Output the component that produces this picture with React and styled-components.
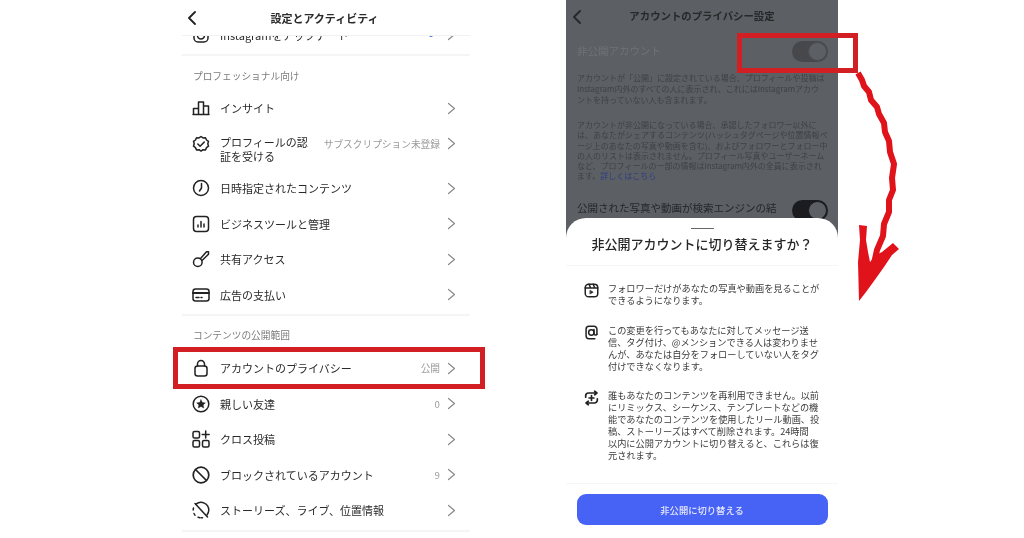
import React from "react";
import styled, { createGlobalStyle, css } from "styled-components";

const Global = createGlobalStyle`
  html, body { margin: 0; padding: 0; background: #fff; }
  body { font-family: "Noto Sans CJK JP", "Inter", "Liberation Sans", sans-serif; color: #262626; }
`;

const Page = styled.div`
  position: relative;
  width: 1024px;
  height: 538px;
  overflow: hidden;
  display: flex;
  align-items: flex-start;
  background: #fff;
  filter: blur(0.35px);
`;

/* ---------- left phone ---------- */
const LeftPhone = styled.section`
  width: 288px;
  height: 538px;
  margin-left: 182px;
  display: flex;
  flex-direction: column;
  overflow: hidden;
`;
const Header = styled.header`
  position: relative;
  z-index: 1;
  flex: none;
  height: 36px;
  display: flex;
  align-items: center;
  justify-content: center;
  background: #fff;
  border-bottom: 1px solid #f1f1f1;
  box-sizing: border-box;
`;
const BackButton = styled.span`
  position: absolute;
  left: ${(p) => p.$left}px;
  top: ${(p) => p.$top}px;
  display: flex;
`;
const HeaderTitle = styled.h1`
  margin: 0 0 0 ${(p) => p.$shift || 0}px;
  font-size: ${(p) => p.$size || 11}px;
  line-height: 14px;
  font-weight: 700;
  color: ${(p) => p.$color || "#2b2b2b"};
`;
const List = styled.div`
  margin-top: -19px;
  display: flex;
  flex-direction: column;
`;
const IconSlot = styled.span`
  flex: none;
  width: 18px;
  height: 18px;
  margin-right: 10px;
  display: flex;
  align-items: center;
  justify-content: center;
`;
const Label = styled.span`
  flex: 1;
  font-size: 11px;
  line-height: 14px;
  color: #2a2a2a;
`;
const Meta = styled.span`
  flex: none;
  font-size: 9.7px;
  line-height: 12px;
  color: #9a9a9a;
  margin-right: 7px;
`;
const ChevronArt = styled.svg`
  flex: none;
  margin-right: 1px;
`;
const Row = styled.div`
  flex: none;
  height: ${(p) => p.$h || 35.5}px;
  display: flex;
  align-items: center;
  padding: 0 13px 0 10px;
  ${(p) =>
    p.$lift &&
    css`
      ${IconSlot}, ${Meta}, ${ChevronArt} {
        margin-bottom: 9px;
      }
      ${Label} {
        margin-top: 2px;
      }
    `}
`;
const Dot = styled.span`
  flex: none;
  width: 4px;
  height: 4px;
  border-radius: 50%;
  background: #3f5df0;
  margin-right: 14px;
`;
const Divider = styled.div`
  flex: none;
  height: 2px;
  margin: ${(p) => p.$m || "1px 0"};
  background: #f5f5f5;
`;
const SectionTitle = styled.div`
  flex: none;
  height: ${(p) => p.$h}px;
  padding: ${(p) => p.$pt}px 0 0 11px;
  box-sizing: border-box;
  font-size: 9.7px;
  line-height: 12px;
  color: #7c7c7c;
`;

/* ---------- right phone ---------- */
const RightPhone = styled.section`
  position: relative;
  width: 272px;
  height: 538px;
  margin-left: 96px;
  background: #5c5f63;
  overflow: hidden;
`;
const DimHeader = styled.header`
  height: 32px;
  display: flex;
  align-items: center;
  justify-content: center;
`;
const DimContent = styled.div`
  padding: 8px 10px 0 11px;
  display: flex;
  flex-direction: column;
`;
const ToggleRow = styled.div`
  display: flex;
  align-items: ${(p) => p.$align || "center"};
  justify-content: space-between;
  height: 22px;
  margin-top: ${(p) => p.$mt || 0}px;
`;
const DimLabel = styled.span`
  font-size: ${(p) => p.$size}px;
  line-height: 14px;
  padding-top: ${(p) => p.$pt || 0}px;
  color: ${(p) => p.$color};
`;
const Toggle = styled.span`
  flex: none;
  position: relative;
  width: 36px;
  height: 21px;
  border-radius: 11px;
  background: ${(p) => p.$bg};
`;
const Knob = styled.span`
  position: absolute;
  right: 1px;
  top: 1px;
  width: 19px;
  height: 19px;
  border-radius: 50%;
  box-sizing: border-box;
  background: #5c5f63;
  border: 1px solid ${(p) => p.$edge};
`;
const DimPara = styled.p`
  margin: ${(p) => p.$mt}px 0 0;
  font-size: 8px;
  line-height: ${(p) => p.$lh}px;
  color: #3f4245;
  white-space: nowrap;
`;
const DimLink = styled.span`
  color: #2f3f86;
`;
const Sheet = styled.div`
  position: absolute;
  left: 0;
  right: 0;
  top: 218px;
  bottom: 0;
  background: #fff;
  border-radius: 20px 20px 0 0;
  display: flex;
  flex-direction: column;
`;
const Handle = styled.span`
  flex: none;
  align-self: center;
  width: 23px;
  height: 1px;
  margin-top: 10px;
  background: #666;
`;
const SheetTitle = styled.h2`
  flex: none;
  margin: 6px 0 0;
  text-align: center;
  font-size: 13px;
  line-height: 18px;
  font-weight: 500;
  color: #262626;
`;
const SheetDivider = styled.div`
  flex: none;
  height: 1px;
  background: #f6f6f6;
  margin-top: ${(p) => p.$mt}px;
`;
const Notes = styled.div`
  flex: none;
  height: 217px;
  padding: 17px 0 0 15px;
  box-sizing: border-box;
  display: flex;
  flex-direction: column;
`;
const Note = styled.div`
  display: flex;
  margin-top: ${(p) => p.$mt || 0}px;
`;
const NoteIcon = styled.span`
  flex: none;
  width: 15px;
  height: 15px;
  margin: 0 9px 0 3px;
  display: flex;
`;
const NoteText = styled.p`
  margin: 0;
  font-size: 9.2px;
  line-height: 11.9px;
  color: #3a3a3a;
  white-space: nowrap;
`;
const Primary = styled.button`
  flex: none;
  align-self: center;
  width: 251px;
  height: 31px;
  margin-top: 10px;
  border: 0;
  border-radius: 9px;
  background: #4763f5;
  color: #e6e9fd;
  font-family: inherit;
  font-size: 9.3px;
  font-weight: 500;
`;

/* ---------- annotations ---------- */
const RedBox = styled.div`
  position: absolute;
  left: ${(p) => p.$x}px;
  top: ${(p) => p.$y}px;
  width: ${(p) => p.$w}px;
  height: ${(p) => p.$h}px;
  box-sizing: border-box;
  border: 5px solid #d21f23;
`;
const ArrowArt = styled.svg`
  position: absolute;
  left: 840px;
  top: 60px;
`;

/* ---------- icons ---------- */
const Svg = ({ size = 18, sw = 1.5, children }) => (
  <svg width={size} height={size} viewBox="0 0 18 18" fill="none" stroke="#222" strokeWidth={sw} strokeLinecap="round" strokeLinejoin="round">
    {children}
  </svg>
);
const Chevron = ({ color = "#8a8a8a" }) => (
  <ChevronArt width="9" height="13" viewBox="0 0 9 13" fill="none" stroke={color} strokeWidth="1.2" strokeLinecap="round" strokeLinejoin="round">
    <path d="M1.500 1.500 7.500 6.500l-6 5" />
  </ChevronArt>
);
const Back = ({ color = "#222" }) => (
  <svg width="10" height="14" viewBox="0 0 10 14" fill="none" stroke={color} strokeWidth="1.8" strokeLinecap="round" strokeLinejoin="round">
    <path d="M8 1 2 7l6 6" />
  </svg>
);
const Ig = () => <Svg><rect x="2" y="2" width="14" height="14" rx="4" /><path d="M5.500 9.500a3.500 3.500 0 0 0 7 0" /></Svg>;
const Insights = () => <Svg><path d="M1.500 15.500V9.500h5v6M6.500 15.500V3h5v12.500M11.500 15.500V7h5v8.500M1 15.500h16" /></Svg>;
const Badge = () => <Svg><path d="M9 1.500l2 1.400 2.500-.2 1 2.300 2 1.400-.7 2.400.7 2.400-2 1.400-1 2.300-2.500-.2-2 1.400-2-1.400-2.500.2-1-2.300-2-1.400.7-2.400-.7-2.400 2-1.400 1-2.300 2.500.2z" /><path d="M5.800 9l2.300 2.300 4.200-4.300" /></Svg>;
const Clock = () => <Svg><circle cx="9" cy="9" r="7.500" /><path d="M9.500 4.500V9L7.500 12" /></Svg>;
const Biz = () => <Svg><rect x="1.500" y="1.500" width="15" height="15" rx="3" /><path d="M6 12V10M9 12V6.500M12 12V9" /></Svg>;
const Key = () => <Svg><circle cx="5.800" cy="12.200" r="4.300" /><path d="M8.300 8.700 14.500 1.800h2v2.400L10 10.500" /></Svg>;
const Card = () => <Svg><rect x="1" y="3" width="16" height="12" rx="2.500" /><path d="M1 7h16" strokeWidth="2.200" /><path d="M4 11.500h3M9 11.500h1" /></Svg>;
const Lock = () => <Svg><rect x="3" y="7" width="12" height="10" rx="2.500" /><path d="M5.500 7V5a3.500 3.500 0 0 1 7 0v2" /></Svg>;
const Star = () => <Svg><circle cx="9" cy="9" r="7.800" /><path d="M9 4.800l1.300 2.700 3 .4-2.200 2 .6 3L9 11.400l-2.700 1.500.6-3-2.200-2 3-.4z" fill="#222" strokeWidth=".5" /></Svg>;
const Cross = () => <Svg><rect x="1" y="1.500" width="6.500" height="6.500" rx="1.500" /><rect x="1" y="10.500" width="6.500" height="6.500" rx="1.500" /><rect x="10.500" y="10.500" width="6.500" height="6.500" rx="1.500" /><path d="M13.700 1v7M10.200 4.500h7" /></Svg>;
const Ban = () => <Svg sw={1.7}><circle cx="9" cy="9" r="7.800" /><path d="M3.500 3.500l11 11" /></Svg>;
const Stories = () => <Svg><path d="M4 3.200A7.800 7.800 0 0 1 16.800 9c0 2-.8 3.800-2 5.200" /><path d="M1.200 9c0-.7.1-1.400.3-2M2 12.500l1 1.800M6 16.300l2 .5h2.500" strokeDasharray="2 1.500" /><path d="M3 2.500 15.500 16" /></Svg>;
const Reels = () => <Svg size={15} sw={1.8}><rect x="1.500" y="1.500" width="15" height="15" rx="4" /><path d="M1.500 6h15M6 1.500l2 4.500M11 1.500l2 4.500" /><path d="M7.500 9l3.500 2-3.500 2z" fill="#222" strokeWidth=".8" /></Svg>;
const AtBox = () => <Svg size={15} sw={1.8}><path d="M15.500 11V5A3.500 3.500 0 0 0 12 1.500H6A3.500 3.500 0 0 0 2.500 5v8A3.500 3.500 0 0 0 6 16.500h7" /><circle cx="8.800" cy="9" r="3.200" /><path d="M12 5.500v5c0 2 3.500 2 3.500 .5" /></Svg>;
const Remix = () => <Svg size={16} sw={2}><path d="M2 8V6.500a3.500 3.500 0 0 1 3.500-3.500H15M12.800 .8 15.500 3l-2.700 2.200" /><path d="M16 10v1.500a3.500 3.500 0 0 1-3.500 3.500H3M5.200 12.800 2.500 15l2.700 2.200" /><path d="M9 6v6M6 9h6" /></Svg>;

const rowsTop = [
  { icon: <Insights />, label: "インサイト" },
  { icon: <Badge />, label: <>プロフィールの認<br />証を受ける</>, meta: "サブスクリプション未登録", h: 44.5, lift: true },
  { icon: <Clock />, label: "日時指定されたコンテンツ" },
  { icon: <Biz />, label: "ビジネスツールと管理" },
  { icon: <Key />, label: "共有アクセス" },
  { icon: <Card />, label: "広告の支払い" },
];
const rowsBottom = [
  { icon: <Lock />, label: "アカウントのプライバシー", meta: "公開" },
  { icon: <Star />, label: "親しい友達", meta: "0" },
  { icon: <Cross />, label: "クロス投稿" },
  { icon: <Ban />, label: "ブロックされているアカウント", meta: "9" },
  { icon: <Stories />, label: "ストーリーズ、ライブ、位置情報" },
];

const SettingRow = ({ icon, label, meta, h, lift }) => (
  <Row $h={h} $lift={lift}>
    <IconSlot>{icon}</IconSlot>
    <Label>{label}</Label>
    {meta && <Meta>{meta}</Meta>}
    <Chevron />
  </Row>
);

export default function App() {
  return (
    <>
      <Global />
      <Page>
        <LeftPhone>
          <Header>
            <BackButton $left={5} $top={11}><Back /></BackButton>
            <HeaderTitle $shift={-3}>設定とアクティビティ</HeaderTitle>
          </Header>
          <List>
            <Row>
              <IconSlot><Ig /></IconSlot>
              <Label>Instagramをアップデート</Label>
              <Dot />
              <Chevron />
            </Row>
            <Divider />
            <SectionTitle $h={34} $pt={13}>プロフェッショナル向け</SectionTitle>
            {rowsTop.map((r, i) => <SettingRow key={i} {...r} />)}
            <Divider />
            <SectionTitle $h={34} $pt={12}>コンテンツの公開範囲</SectionTitle>
            {rowsBottom.map((r, i) => <SettingRow key={i} {...r} />)}
            <Divider $m="2px 0" />
          </List>
        </LeftPhone>

        <RightPhone>
          <DimHeader>
            <BackButton $left={6} $top={10}><Back color="#26282a" /></BackButton>
            <HeaderTitle $size={10.4} $color="#26282a">アカウントのプライバシー設定</HeaderTitle>
          </DimHeader>
          <DimContent>
            <ToggleRow>
              <DimLabel $size={10.5} $color="#6f7276">非公開アカウント</DimLabel>
              <Toggle $bg="#46484c"><Knob $edge="#4b4d51" /></Toggle>
            </ToggleRow>
            <DimPara $mt={10} $lh={11}>
              アカウントが「公開」に設定されている場合、プロフィールや投稿は<br />
              Instagram内外のすべての人に表示され、これにはInstagramアカウ<br />
              ントを持っていない人も含まれます。
            </DimPara>
            <DimPara $mt={15} $lh={10.3}>
              アカウントが非公開になっている場合、承認したフォロワー以外に<br />
              は、あなたがシェアするコンテンツ(ハッシュタグページや位置情報ペ<br />
              ージ上のあなたの写真や動画を含む)、およびフォロワーとフォロー中<br />
              の人のリストは表示されません。プロフィール写真やユーザーネーム<br />
              など、プロフィールの一部の情報はInstagram内外の全員に表示され<br />
              ます。<DimLink>詳しくはこちら</DimLink>
            </DimPara>
            <ToggleRow $mt={18} $align="flex-start">
              <DimLabel $size={10.5} $pt={1} $color="#25272a">公開された写真や動画が検索エンジンの結</DimLabel>
              <Toggle $bg="#1b1c1f"><Knob $edge="#1b1c1f" /></Toggle>
            </ToggleRow>
          </DimContent>

          <Sheet>
            <Handle />
            <SheetTitle>非公開アカウントに切り替えますか？</SheetTitle>
            <SheetDivider $mt={12} />
            <Notes>
              <Note>
                <NoteIcon><Reels /></NoteIcon>
                <NoteText>フォロワーだけがあなたの写真や動画を見ることが<br />できるようになります。</NoteText>
              </Note>
              <Note $mt={18}>
                <NoteIcon><AtBox /></NoteIcon>
                <NoteText>この変更を行ってもあなたに対してメッセージ送<br />信、タグ付け、@メンションできる人は変わりませ<br />んが、あなたは自分をフォローしていない人をタグ<br />付けできなくなります。</NoteText>
              </Note>
              <Note $mt={18}>
                <NoteIcon><Remix /></NoteIcon>
                <NoteText>誰もあなたのコンテンツを再利用できません。以前<br />にリミックス、シーケンス、テンプレートなどの機<br />能であなたのコンテンツを使用したリール動画、投<br />稿、ストーリーズはすべて削除されます。24時間<br />以内に公開アカウントに切り替えると、これらは復<br />元されます。</NoteText>
              </Note>
            </Notes>
            <SheetDivider $mt={0} />
            <Primary>非公開に切り替える</Primary>
          </Sheet>
        </RightPhone>

        <RedBox $x={173} $y={347} $w={312} $h={42} />
        <RedBox $x={737} $y={33} $w={121} $h={40} />
        <ArrowArt width="70" height="250" viewBox="840 60 70 250">
          <path d="M858 73L862 80 864 86 869 92 871 100 877 107 879 114 884 123 885 132 889 141 890 152 894 164 892 178 893 190 889 200 889 212 884 224 883 236 877 250 873 268 866 282" fill="none" stroke="#e0121a" strokeWidth="6" strokeLinejoin="round" />
          <path d="M859 301 858 262 860 240 859 225 867 226 866 240 868 252 870 262 876 255 882 252 893 243 899 249 892 255 884 267 874 281 866 292z" fill="#e0121a" />
        </ArrowArt>
      </Page>
    </>
  );
}
